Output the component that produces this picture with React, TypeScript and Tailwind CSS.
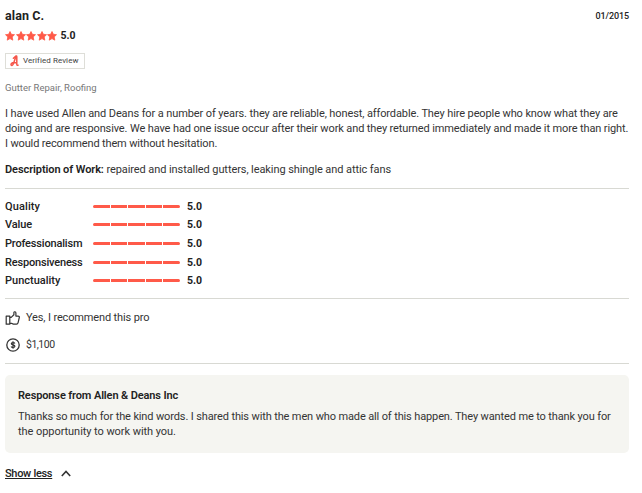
import React from "react";

const ratings = [
  { label: "Quality", height: "h-[18px]", spacing: "tracking-[0.12px]" },
  { label: "Value", height: "h-[19px]", spacing: "tracking-[-0.1px]" },
  { label: "Professionalism", height: "h-[19px]", spacing: "tracking-[-0.17px]" },
  { label: "Responsiveness", height: "h-[18px]", spacing: "tracking-[-0.18px]" },
  { label: "Punctuality", height: "h-[18px]", spacing: "tracking-[0px]" },
];

function Star() {
  return (
    <svg className="h-[10px] w-[10px]" viewBox="0 0 20 20" fill="#ff5a49">
      <path d="M10 1l2.7 5.6 6.3.8-4.6 4.5 1.2 6.4L10 15.2l-5.6 3.1 1.2-6.4L1 7.4l6.3-.8z" stroke="#ff5a49" strokeWidth="1.6" strokeLinejoin="round" />
    </svg>
  );
}

function BrandMark() {
  return (
    <svg className="h-[12px] w-[9px]" viewBox="0 0 9 12" fill="none" stroke="#f5564a" strokeWidth="1.5" strokeLinecap="round" strokeLinejoin="round">
      <path d="M3.4 3.2L5.6 1.2c.6-.5 1.2-.2 1.2.6v7.4c0 1 .5 1.4 1.3 1M6 1.2L3.5 8.6C2.8 10.8 1 11 1 9.4c0-1.5 2.3-2.1 5.8-2" />
    </svg>
  );
}

function ThumbIcon() {
  return (
    <svg className="h-[14px] w-[15px]" viewBox="0 0 15 14" fill="none" stroke="#343434" strokeWidth="1.2" strokeLinejoin="round">
      <path d="M1.2 5.1h3.6v8.1H1.2z" />
      <path d="M4.8 6.4h1.4l2.7-2.6V1.6c0-1.3 2-1.1 2 .3v3.2h2.2c.9 0 1.4.6 1.2 1.4l-1.2 5.2c-.2.9-.7 1.4-1.6 1.4H8.3l-1.8-.8H4.8" />
    </svg>
  );
}

function DollarIcon() {
  return (
    <svg className="h-[14px] w-[14px]" viewBox="0 0 14 14" fill="none" stroke="#343434">
      <circle cx="7" cy="7" r="6.2" strokeWidth="1.3" />
      <path d="M8.9 5.4C8.4 4.2 5.3 4.2 5.3 5.7c0 1.6 3.6.9 3.6 2.6 0 1.6-3.2 1.6-3.8.2M7 3.3v7.4" strokeWidth="1.2" />
    </svg>
  );
}

export default function App() {
  return (
    <main className="h-[493px] w-[642px] overflow-hidden bg-white pl-[5px] pr-[13px] pt-[8px] font-['Roboto','Liberation_Sans',sans-serif] text-[11px] leading-[15px] whitespace-nowrap text-[#343434]">
      <header className="flex h-[16px] items-center justify-between text-[#222]">
        <h1 className="text-[12.5px] leading-[16px] font-bold tracking-[0.1px]">alan C.</h1>
        <time className="text-[9px] leading-[14px] font-medium tracking-[-0.1px]">01/2015</time>
      </header>
      <div className="mt-[4px] flex h-[15px] items-center">
        <div className="flex gap-[0.5px]">
          <Star /><Star /><Star /><Star /><Star />
        </div>
        <span className="ml-[3.5px] text-[10.5px] font-bold text-[#222]">5.0</span>
      </div>
      <div className="mt-[10px] flex h-[16px] w-[80px] items-center border border-[#deded8] pl-[4px]">
        <BrandMark />
        <span className="ml-[4px] text-[8px] leading-[14px] tracking-[0.07px] text-[#444]">Verified Review</span>
      </div>
      <p className="mt-[11px] text-[9.5px] leading-[15px] text-[#777]">Gutter Repair, Roofing</p>
      <div className="mt-[11px]">
        <p className="tracking-[-0.108px]">I have used Allen and Deans for a number of years. they are reliable, honest, affordable. They hire people who know what they are</p>
        <p className="tracking-[-0.118px]">doing and are responsive. We have had one issue occur after their work and they returned immediately and made it more than right.</p>
        <p className="tracking-[-0.14px]">I would recommend them without hesitation.</p>
      </div>
      <p className="mt-[11px] tracking-[-0.085px]">
        <b className="font-semibold text-[#222]">Description of Work:</b>{" "}
        <span>repaired and installed gutters, leaking shingle and attic fans</span>
      </p>
      <section className="mt-[11px] h-[111px] border-t border-b border-[#d8d9d3] pt-[8px]">
        {ratings.map((r) => (
          <div key={r.label} className={`flex items-center ${r.height}`}>
            <span className={`w-[88px] font-medium text-[#222] ${r.spacing}`}>{r.label}</span>
            <div className="flex w-[87px] gap-px overflow-hidden rounded-full">
              {[0, 1, 2, 3, 4].map((i) => (
                <i key={i} className="h-[3px] flex-1 bg-[#ff5a49]" />
              ))}
            </div>
            <b className="ml-[7px] text-[10.5px] font-bold text-[#222]">5.0</b>
          </div>
        ))}
      </section>
      <section className="h-[65px] border-b border-[#d8d9d3] pt-[11px]">
        <div className="flex h-[15px] items-center">
          <ThumbIcon />
          <span className="ml-[6px] tracking-[-0.14px]">Yes, I recommend this pro</span>
        </div>
        <div className="mt-[12px] flex h-[15px] items-center">
          <span className="ml-[1px]"><DollarIcon /></span>
          <span className="ml-[6px] text-[10.5px] tracking-[-0.5px]">$1,100</span>
        </div>
      </section>
      <section className="mt-[11px] h-[78px] rounded-[5px] bg-[#f5f5f1] pt-[13px] pl-[13px]">
        <h2 className="font-semibold tracking-[-0.125px] text-[#222]">Response from Allen &amp; Deans Inc</h2>
        <div className="mt-[6px]">
          <p className="tracking-[-0.13px]">Thanks so much for the kind words. I shared this with the men who made all of this happen. They wanted me to thank you for</p>
          <p className="tracking-[-0.06px]">the opportunity to work with you.</p>
        </div>
      </section>
      <button className="mt-[13px] flex h-[15px] items-center font-medium text-[#222]">
        <span className="tracking-[-0.3px] underline decoration-1 underline-offset-[1px] [text-decoration-skip-ink:none]">Show less</span>
        <svg className="ml-[9px] h-[7px] w-[10px]" viewBox="0 0 10 7" fill="none" stroke="#343434" strokeWidth="1.6"><path d="M.8 6L5 1.5 9.2 6" /></svg>
      </button>
    </main>
  );
}
